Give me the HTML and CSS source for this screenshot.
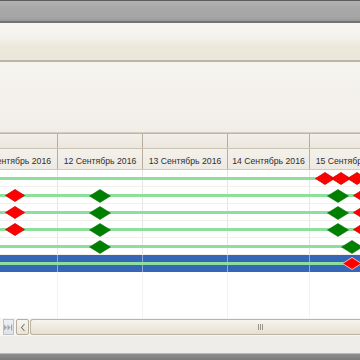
FILE: index.html
```html
<!DOCTYPE html>
<html>

<head>
	<meta charset="utf-8">
	<title>Gantt</title>
	<link rel="stylesheet" href="styles.css">
</head>

<body>
	<div class="window">
		<div class="titlebar"></div>
		<div class="toolbar"></div>
		<div class="panel"></div>

		<div class="gantt">
			<div class="gantt-inner">
				<div class="cols hdr-top">
					<span></span><span></span><span></span><span></span><span></span>
				</div>
				<div class="cols hdr-days">
					<span>11 Сентябрь 2016</span>
					<span>12 Сентябрь 2016</span>
					<span>13 Сентябрь 2016</span>
					<span>14 Сентябрь 2016</span>
					<span>15 Сентябрь 2016</span>
				</div>

				<div class="cols row">
					<span></span><span></span><span></span><span></span><span></span>
					<i class="bar"></i>
					<svg class="ms red" style="left:342px" viewBox="0 0 20 13"><polygon points="10,0.5 19.5,6.5 10,12.5 0.5,6.5"/></svg>
					<svg class="ms red" style="left:358px" viewBox="0 0 20 13"><polygon points="10,0.5 19.5,6.5 10,12.5 0.5,6.5"/></svg>
					<svg class="ms red" style="left:374px" viewBox="0 0 20 13"><polygon points="10,0.5 19.5,6.5 10,12.5 0.5,6.5"/></svg>
				</div>
				<div class="cols row">
					<span></span><span></span><span></span><span></span><span></span>
					<i class="bar"></i>
					<svg class="ms red" style="left:32px" viewBox="0 0 20 13"><polygon points="10,0.5 19.5,6.5 10,12.5 0.5,6.5"/></svg>
					<svg class="ms green" style="left:116px" viewBox="0 0 22 14"><polygon points="11,0.5 21.5,7 11,13.5 0.5,7"/></svg>
					<svg class="ms red" style="left:380px" viewBox="0 0 20 13"><polygon points="10,0.5 19.5,6.5 10,12.5 0.5,6.5"/></svg>
					<svg class="ms green" style="left:354px" viewBox="0 0 22 14"><polygon points="11,0.5 21.5,7 11,13.5 0.5,7"/></svg>
				</div>
				<div class="cols row">
					<span></span><span></span><span></span><span></span><span></span>
					<i class="bar"></i>
					<svg class="ms red" style="left:32px" viewBox="0 0 20 13"><polygon points="10,0.5 19.5,6.5 10,12.5 0.5,6.5"/></svg>
					<svg class="ms green" style="left:116px" viewBox="0 0 22 14"><polygon points="11,0.5 21.5,7 11,13.5 0.5,7"/></svg>
					<svg class="ms red" style="left:380px" viewBox="0 0 20 13"><polygon points="10,0.5 19.5,6.5 10,12.5 0.5,6.5"/></svg>
					<svg class="ms green" style="left:354px" viewBox="0 0 22 14"><polygon points="11,0.5 21.5,7 11,13.5 0.5,7"/></svg>
				</div>
				<div class="cols row">
					<span></span><span></span><span></span><span></span><span></span>
					<i class="bar"></i>
					<svg class="ms red" style="left:32px" viewBox="0 0 20 13"><polygon points="10,0.5 19.5,6.5 10,12.5 0.5,6.5"/></svg>
					<svg class="ms green" style="left:116px" viewBox="0 0 22 14"><polygon points="11,0.5 21.5,7 11,13.5 0.5,7"/></svg>
					<svg class="ms red" style="left:380px" viewBox="0 0 20 13"><polygon points="10,0.5 19.5,6.5 10,12.5 0.5,6.5"/></svg>
					<svg class="ms green" style="left:354px" viewBox="0 0 22 14"><polygon points="11,0.5 21.5,7 11,13.5 0.5,7"/></svg>
				</div>
				<div class="cols row">
					<span></span><span></span><span></span><span></span><span></span>
					<i class="bar"></i>
					<svg class="ms green" style="left:116px" viewBox="0 0 22 14"><polygon points="11,0.5 21.5,7 11,13.5 0.5,7"/></svg>
					<svg class="ms green" style="left:368px" viewBox="0 0 22 14"><polygon points="11,0.5 21.5,7 11,13.5 0.5,7"/></svg>
				</div>
				<div class="cols row selected">
					<span></span><span></span><span></span><span></span><span></span>
					<i class="bar"></i>
					<svg class="ms red" style="left:369px" viewBox="0 0 20 13"><polygon points="10,0.5 19.5,6.5 10,12.5 0.5,6.5"/></svg>
				</div>

				<div class="cols filler">
					<span></span><span></span><span></span><span></span><span></span>
				</div>
			</div>
		</div>

		<div class="hscroll">
			<div class="sb-end">
				<svg width="9" height="7" viewBox="0 0 9 7"><polygon points="0,0.5 3,3.5 0,6.5" /><polygon points="3.5,0.5 6.5,3.5 3.5,6.5" /><rect x="7" y="0.5" width="1.2" height="6" /></svg>
			</div>
			<div class="sb-left">
				<svg width="6" height="9" viewBox="0 0 6 9"><polyline points="4.5,1 1.5,4.5 4.5,8" /></svg>
			</div>
			<div class="sb-thumb">
				<span class="grip"></span>
			</div>
		</div>
		<div class="statusbar"></div>
		<div class="bottom"></div>
	</div>
</body>

</html>
```

FILE: styles.css
```css
body {
	margin: 0;
	padding: 0;
	font-family: "Liberation Sans", Arial, sans-serif;
	background-color: #fff;
}

.window {
	width: 360px;
	height: 360px;
	display: flex;
	flex-direction: column;
	overflow: hidden;
}

.titlebar {
	height: 20px;
	border-top: 1px solid #5d5d5d;
	border-bottom: 2px solid #747474;
	background: linear-gradient(#b2b2b2, #a8a8a8 40%, #a6a6a6 80%, #999);
}

.toolbar {
	height: 37px;
	border-bottom: 2px solid #bcb4a7;
	background: linear-gradient(#f7f6f2, #f4f2ec 40%, #ece8dc 62%, #ebe6da);
}

.panel {
	height: 70px;
	border-bottom: 1px solid #d3ccbf;
	background: linear-gradient(#f6f4ef, #f1eee8);
}

.gantt {
	height: 185px;
	overflow: hidden;
	background-color: #fff;
}

.gantt-inner {
	margin-left: -27px;
	width: 430px;
	height: 185px;
	display: flex;
	flex-direction: column;
}

.cols {
	display: grid;
	grid-template-columns: 85px 85px 85px 82px 85px;
	flex-shrink: 0;
}

.hdr-top {
	height: 14px;
	border-top: 1px solid #bdb5a8;
	border-bottom: 1px solid #cbc3b6;
	background: linear-gradient(#f3f0ea, #ebe7de);
}

.hdr-top span,
.hdr-days span {
	border-right: 1px solid #b6ad9f;
}

.hdr-days {
	height: 20px;
	border-bottom: 1px solid #d2cabd;
	background: linear-gradient(#f4f1eb, #eeeae2);
}

.hdr-days span {
	font-size: 8.7px;
	color: #2e2e2e;
	text-align: center;
	white-space: nowrap;
	overflow: hidden;
	line-height: 24px;
}

.row {
	position: relative;
	height: 17px;
}

.row span {
	border-right: 1px solid #e9e5e1;
	border-bottom: 1px solid #f3f0ee;
}

.row .bar {
	position: absolute;
	left: 0;
	right: 0;
	top: 7px;
	height: 3px;
	background-color: #8ddf9c;
}

.row.selected {
	background-color: #3566b7;
}

.row.selected span {
	border-right: 1px solid #8fa9d6;
	border-bottom: none;
}

.ms {
	position: absolute;
}

.ms.red {
	width: 20px;
	height: 13px;
	top: 2px;
}

.ms.red polygon {
	fill: #f00;
	stroke: #d80000;
	stroke-width: 0.8;
}

.selected .ms.red polygon {
	stroke: #ffb4b4;
	stroke-width: 1;
}

.ms.green {
	width: 22px;
	height: 14px;
	top: 1.5px;
}

.ms.green polygon {
	fill: #007f00;
	stroke: #0a700a;
	stroke-width: 0.6;
}

.filler {
	flex: 1;
}

.filler span {
	border-right: 1px solid #f4f2f0;
}

.hscroll {
	height: 16px;
	padding: 1px 0 1px 3px;
	display: flex;
	background-color: #f6f5f2;
}

.sb-end {
	width: 9px;
	border: 1px solid #bfc4c9;
	background: linear-gradient(#eef0f3, #dfe3e8);
	display: flex;
	align-items: center;
	justify-content: center;
}

.sb-end svg {
	fill: #a2a8b0;
}

.sb-left {
	width: 11px;
	margin-left: 2px;
	border: 1px solid #b6ac9c;
	border-radius: 2px;
	background: linear-gradient(#f8f6f0, #e9e4d8);
	display: flex;
	align-items: center;
	justify-content: center;
}

.sb-left svg {
	fill: none;
	stroke: #7f7a72;
	stroke-width: 1.1;
}

.sb-thumb {
	flex: 1;
	margin-left: 1px;
	border: 1px solid #bdb3a2;
	border-right: none;
	border-radius: 3px 0 0 3px;
	background: linear-gradient(#f6f4ee, #eeeadf 50%, #e6e0d2);
	display: flex;
	align-items: center;
}

.grip {
	margin-left: 227px;
	width: 5px;
	height: 6px;
	background: repeating-linear-gradient(90deg, #9a958c 0 1px, transparent 1px 2px);
}

.statusbar {
	height: 17px;
	background-color: #efedea;
}

.bottom {
	height: 6px;
	border-top: 1px solid #b9b9b9;
	background: linear-gradient(#8e8e8e, #7b7b7b);
}
```
